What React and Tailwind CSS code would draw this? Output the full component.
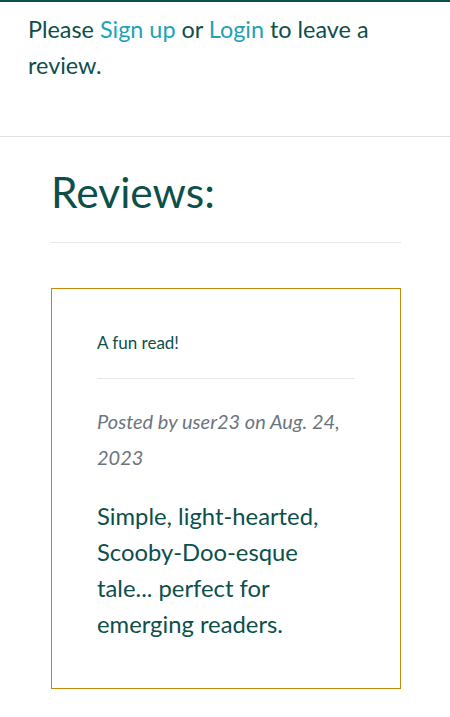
export default function App() {
  return (
    <div className="min-h-[717px] bg-white font-['Lato','Liberation_Sans',sans-serif] text-[#0d4f4b]">
      <div className="border-t-2 border-[#0d4f4b]">
        <p className="px-[28px] pt-[9px] pb-[53px] text-[23.4px] leading-[36px]">
          Please <a href="#" className="text-[#20a4b5]">Sign up</a> or{" "}
          <a href="#" className="text-[#20a4b5]">Login</a> to leave a review.
        </p>
      </div>

      <section className="border-t border-[#e2e2e2] pl-[51px] pr-[49px] pt-[28px]">
        <h2 className="pb-[23px] text-[42.5px] leading-[54px]">Reviews:</h2>
        <hr className="border-[#e6e6e6]" />

        <div className="mt-[45px] border border-[#c6870d] px-[45px] pt-[42px] pb-[46px]">
          <p className="text-[17px] leading-[24px]">A fun read!</p>
          <hr className="mt-[23px] border-[#e6e6e6]" />
          <p className="mt-[24px] text-[20px] leading-[36px] italic text-[#6c757d]">
            Posted by user23 on Aug. 24, 2023
          </p>
          <p className="mt-[23px] text-[23.8px] leading-[36px]">
            Simple, light-hearted, Scooby-Doo-esque tale... perfect for emerging readers.
          </p>
        </div>
      </section>
    </div>
  );
}
